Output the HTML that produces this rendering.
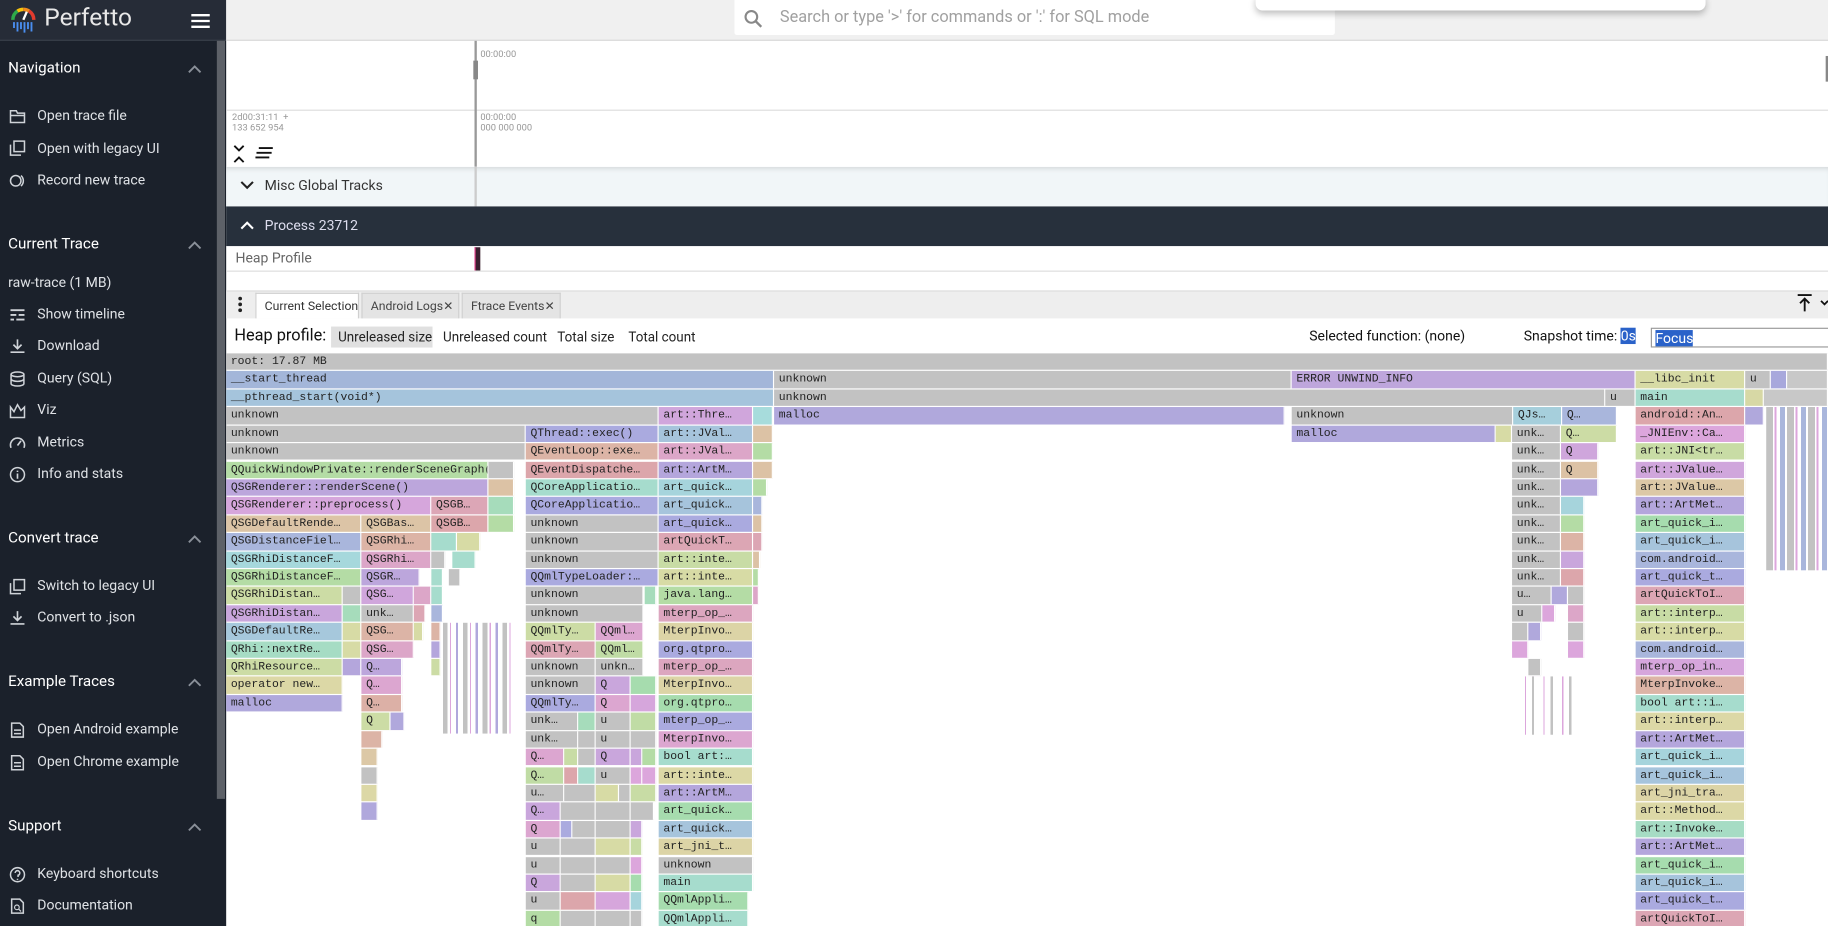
<!DOCTYPE html>
<html><head><meta charset="utf-8">
<style>
*{box-sizing:border-box;margin:0;padding:0}
html,body{width:1828px;height:926px;overflow:hidden;background:#fff}
#w{position:absolute;left:0;top:0;width:1568px;height:794px;transform:scale(1.16582,1.16625);transform-origin:0 0;font-family:"Roboto","Liberation Sans",sans-serif;overflow:hidden}
.abs{position:absolute;white-space:nowrap}
#sb{left:0;top:0;width:194px;height:794px;background:#1b212b;color:#e6e8ea}
#sbh{left:0;top:0;width:194px;height:35px;background:#262c37;border-bottom:1px solid #3a404a}
#scr{left:186px;top:35px;width:7px;height:650px;background:#5d6168}
.sh{position:absolute;left:7px;font-size:13px;color:#fff}
.si{position:absolute;left:32px;font-size:12px;color:#dfe2e6;white-space:nowrap}
.ic{position:absolute;left:8px;width:14px;height:14px}
.chev{position:absolute;left:161px;width:12px;height:8px}
#top{left:194px;top:0;width:1374px;height:35px;background:#f0f0f0;border-bottom:1px solid #d8d8d8}
.r{position:absolute;left:0;width:1568px;height:14.4px}
.r i{position:absolute;top:0;height:14.4px;font-style:normal;font-family:"Liberation Mono","DejaVu Sans Mono",monospace;font-size:9.8px;line-height:14.4px;padding-left:4px;color:#222;white-space:nowrap;overflow:hidden;border-right:1px solid #fff}
.tab{position:absolute;top:251px;height:22px;font-size:10.5px;line-height:22px;padding-left:7px;color:#444;background:#e4e4e4;border:1px solid #d0d0d0;border-bottom:none;white-space:nowrap;overflow:hidden}
.btn{position:absolute;top:280px;height:18px;font-size:11.5px;line-height:18px;color:#222;padding:0 6px;white-space:nowrap}
</style></head><body><div id="w">

<!-- sidebar -->
<div id="sb" class="abs">
 <div id="sbh" class="abs">
  <svg class="abs" style="left:8px;top:4px" width="24" height="26" viewBox="0 0 24 26">
   <path d="M3 13 A9 9 0 0 1 7 5.5" stroke="#2eaa4a" stroke-width="3" fill="none"/>
   <path d="M7 5.5 A9 9 0 0 1 12 4" stroke="#f6c20d" stroke-width="3" fill="none"/>
   <path d="M12 4 A9 9 0 0 1 17 5.5" stroke="#f08a1d" stroke-width="3" fill="none"/>
   <path d="M17 5.5 A9 9 0 0 1 21 13" stroke="#e23b2e" stroke-width="3" fill="none"/>
   <path d="M12 13 L15 6" stroke="#fff" stroke-width="2"/>
   <path d="M4 15v5M7 15v8M10 15v6M13 15v9M16 15v6M19 15v8" stroke="#4a8ef0" stroke-width="1.6"/>
  </svg>
  <div class="abs" style="left:38px;top:4px;font-size:21px;color:#e8e8e8">Perfetto</div>
  <svg class="abs" style="left:164px;top:12px" width="16" height="12"><path d="M0 1h16M0 6h16M0 11h16" stroke="#fff" stroke-width="2"/></svg>
 </div>
 <div id="scr" class="abs"></div>

 <div class="sh" style="top:51px">Navigation</div>
 <svg class="chev" style="top:55px" viewBox="0 0 12 8"><path d="M1 7l5-5 5 5" stroke="#8a9099" stroke-width="1.6" fill="none"/></svg>
 <svg class="ic" style="top:93px" viewBox="0 0 14 14"><path d="M1 2h5l1 2h6v8H1z M1 6h12" stroke="#cfd3d8" stroke-width="1.3" fill="none"/></svg>
 <div class="si" style="top:92px">Open trace file</div>
 <svg class="ic" style="top:120px" viewBox="0 0 14 14"><path d="M4 1h9v9H4z M1 4v9h9" stroke="#cfd3d8" stroke-width="1.3" fill="none"/></svg>
 <div class="si" style="top:120px">Open with legacy UI</div>
 <svg class="ic" style="top:148px" viewBox="0 0 14 14"><circle cx="5.5" cy="7" r="4.5" stroke="#cfd3d8" stroke-width="1.3" fill="none"/><path d="M10 2.5a6 6 0 0 1 0 9" stroke="#cfd3d8" stroke-width="1.3" fill="none"/></svg>
 <div class="si" style="top:147px">Record new trace</div>

 <div class="sh" style="top:202px">Current Trace</div>
 <svg class="chev" style="top:206px" viewBox="0 0 12 8"><path d="M1 7l5-5 5 5" stroke="#8a9099" stroke-width="1.6" fill="none"/></svg>
 <div class="si" style="left:7px;top:235px">raw-trace (1 MB)</div>
 <svg class="ic" style="top:263px" viewBox="0 0 14 14"><path d="M1 3h12M1 7h5M8 7h5M1 11h3M6 11h7" stroke="#cfd3d8" stroke-width="1.6"/></svg>
 <div class="si" style="top:262px">Show timeline</div>
 <svg class="ic" style="top:290px" viewBox="0 0 14 14"><path d="M7 1v8M3.5 5.5L7 9l3.5-3.5M1 12h12" stroke="#cfd3d8" stroke-width="1.4" fill="none"/></svg>
 <div class="si" style="top:289px">Download</div>
 <svg class="ic" style="top:318px" viewBox="0 0 14 14"><ellipse cx="7" cy="3" rx="5.5" ry="2" stroke="#cfd3d8" fill="none" stroke-width="1.3"/><path d="M1.5 3v8c0 1 2.5 2 5.5 2s5.5-1 5.5-2V3M1.5 7c0 1 2.5 2 5.5 2s5.5-1 5.5-2" stroke="#cfd3d8" fill="none" stroke-width="1.3"/></svg>
 <div class="si" style="top:317px">Query (SQL)</div>
 <svg class="ic" style="top:345px" viewBox="0 0 14 14"><path d="M1 13V4l3 4 3-6 3 5 3-3v9z" stroke="#cfd3d8" stroke-width="1.3" fill="none"/></svg>
 <div class="si" style="top:344px">Viz</div>
 <svg class="ic" style="top:373px" viewBox="0 0 14 14"><path d="M1.5 11a6 6 0 1 1 11 0" stroke="#cfd3d8" stroke-width="1.4" fill="none"/><path d="M7 9l3-4" stroke="#cfd3d8" stroke-width="1.4"/></svg>
 <div class="si" style="top:372px">Metrics</div>
 <svg class="ic" style="top:400px" viewBox="0 0 14 14"><circle cx="7" cy="7" r="6" stroke="#cfd3d8" stroke-width="1.3" fill="none"/><path d="M7 6v4.5M7 3.5v1.2" stroke="#cfd3d8" stroke-width="1.4"/></svg>
 <div class="si" style="top:399px">Info and stats</div>

 <div class="sh" style="top:454px">Convert trace</div>
 <svg class="chev" style="top:458px" viewBox="0 0 12 8"><path d="M1 7l5-5 5 5" stroke="#8a9099" stroke-width="1.6" fill="none"/></svg>
 <svg class="ic" style="top:496px" viewBox="0 0 14 14"><path d="M4 1h9v9H4z M1 4v9h9" stroke="#cfd3d8" stroke-width="1.3" fill="none"/></svg>
 <div class="si" style="top:495px">Switch to legacy UI</div>
 <svg class="ic" style="top:523px" viewBox="0 0 14 14"><path d="M7 1v8M3.5 5.5L7 9l3.5-3.5M1 12h12" stroke="#cfd3d8" stroke-width="1.4" fill="none"/></svg>
 <div class="si" style="top:522px">Convert to .json</div>

 <div class="sh" style="top:577px">Example Traces</div>
 <svg class="chev" style="top:581px" viewBox="0 0 12 8"><path d="M1 7l5-5 5 5" stroke="#8a9099" stroke-width="1.6" fill="none"/></svg>
 <svg class="ic" style="top:619px" viewBox="0 0 14 14"><path d="M2 1h7l3 3v9H2z M4 7h6M4 10h6" stroke="#cfd3d8" stroke-width="1.3" fill="none"/></svg>
 <div class="si" style="top:618px">Open Android example</div>
 <svg class="ic" style="top:647px" viewBox="0 0 14 14"><path d="M2 1h7l3 3v9H2z M4 7h6M4 10h6" stroke="#cfd3d8" stroke-width="1.3" fill="none"/></svg>
 <div class="si" style="top:646px">Open Chrome example</div>

 <div class="sh" style="top:701px">Support</div>
 <svg class="chev" style="top:705px" viewBox="0 0 12 8"><path d="M1 7l5-5 5 5" stroke="#8a9099" stroke-width="1.6" fill="none"/></svg>
 <svg class="ic" style="top:743px" viewBox="0 0 14 14"><circle cx="7" cy="7" r="6" stroke="#cfd3d8" stroke-width="1.3" fill="none"/><path d="M5 5.5a2 2 0 1 1 2.5 2V9M7 10.5v1" stroke="#cfd3d8" stroke-width="1.3" fill="none"/></svg>
 <div class="si" style="top:742px">Keyboard shortcuts</div>
 <svg class="ic" style="top:770px" viewBox="0 0 14 14"><path d="M2 1h7l3 3v9H2z" stroke="#cfd3d8" stroke-width="1.3" fill="none"/><circle cx="6.5" cy="8" r="2" stroke="#cfd3d8" fill="none"/><path d="M8 9.5l2 2" stroke="#cfd3d8"/></svg>
 <div class="si" style="top:769px">Documentation</div>
</div>

<!-- top bar -->
<div id="top" class="abs"></div>
<div class="abs" style="left:630px;top:0;width:515px;height:30px;background:#fff;border-radius:0 0 2px 2px"></div>
<svg class="abs" style="left:638px;top:8px" width="16" height="16"><circle cx="6.5" cy="6.5" r="5" stroke="#888" stroke-width="1.8" fill="none"/><path d="M10 10l5 5" stroke="#888" stroke-width="2"/></svg>
<div class="abs" style="left:669px;top:7px;font-size:14px;color:#a0a0a0">Search or type '&gt;' for commands or ':' for SQL mode</div>
<div class="abs" style="left:1077px;top:-6px;width:386px;height:15px;background:#fff;border-radius:6px;box-shadow:0 3px 6px rgba(0,0,0,.25)"></div>

<!-- timeline -->
<div class="abs" style="left:194px;top:94px;width:1374px;height:1px;background:#ddd"></div>
<div class="abs" style="left:407px;top:35px;width:1.5px;height:108px;background:#999"></div>
<div class="abs" style="left:406px;top:52px;width:4px;height:16px;background:#888"></div>
<div class="abs" style="left:1566px;top:48px;width:2px;height:22px;background:#888"></div>
<div class="abs" style="left:412px;top:42px;font-size:8px;color:#999">00:00:00</div>
<div class="abs" style="left:199px;top:96px;font-size:8px;color:#999;line-height:9px">2d00:31:11 &nbsp;+<br>133 652 954</div>
<div class="abs" style="left:412px;top:96px;font-size:8px;color:#999;line-height:9px">00:00:00<br>000 000 000</div>
<svg class="abs" style="left:200px;top:124px" width="10" height="16"><path d="M1 1l4 4 4-4M1 15l4-4 4 4" stroke="#111" stroke-width="1.6" fill="none"/></svg>
<svg class="abs" style="left:219px;top:126px" width="16" height="10"><path d="M3 1h12M1 5h13M0 9h12" stroke="#111" stroke-width="1.6"/></svg>
<div class="abs" style="left:194px;top:143px;width:1374px;height:34px;background:#f1f6f8;box-shadow:inset 0 4px 5px -3px rgba(0,0,0,.15)"></div>
<div class="abs" style="left:407px;top:143px;width:1.5px;height:34px;background:#ccc"></div>
<svg class="abs" style="left:206px;top:155px" width="12" height="8"><path d="M1 1l5 5 5-5" stroke="#222" stroke-width="1.8" fill="none"/></svg>
<div class="abs" style="left:227px;top:152px;font-size:12px;color:#333">Misc Global Tracks</div>
<div class="abs" style="left:194px;top:177px;width:1374px;height:34px;background:#27303c"></div>
<svg class="abs" style="left:206px;top:189px" width="12" height="8"><path d="M1 7l5-5 5 5" stroke="#fff" stroke-width="1.8" fill="none"/></svg>
<div class="abs" style="left:227px;top:186px;font-size:12px;color:#dde">Process 23712</div>
<div class="abs" style="left:202px;top:214px;font-size:12px;color:#666">Heap Profile</div>
<div class="abs" style="left:407px;top:212px;width:5px;height:20px;background:#3a2030;border-left:1px solid #e0408a"></div>
<div class="abs" style="left:194px;top:232px;width:1374px;height:1px;background:#ddd"></div>

<!-- tabs -->
<div class="abs" style="left:194px;top:249px;width:1374px;height:24px;background:#eee;border-top:1px solid #ddd"></div>
<svg class="abs" style="left:203px;top:253px" width="6" height="16"><circle cx="3" cy="3" r="1.6" fill="#222"/><circle cx="3" cy="8" r="1.6" fill="#222"/><circle cx="3" cy="13" r="1.6" fill="#222"/></svg>
<div class="tab" style="left:219px;width:89px;background:#fff;color:#333">Current Selection</div>
<div class="tab" style="left:310px;width:84px">Android Logs<span style="position:absolute;right:4px">✕</span></div>
<div class="tab" style="left:396px;width:85px">Ftrace Events<span style="position:absolute;right:4px">✕</span></div>
<svg class="abs" style="left:1541px;top:252px" width="14" height="16"><path d="M1 1h12M7 4v11M3 8l4-4 4 4" stroke="#111" stroke-width="1.6" fill="none"/></svg>
<svg class="abs" style="left:1561px;top:257px" width="8" height="6"><path d="M1 1l3 3 3-3" stroke="#111" stroke-width="1.5" fill="none"/></svg>

<!-- heap controls -->
<div class="abs" style="left:201px;top:280px;font-size:14px;color:#111">Heap profile:</div>
<div class="btn" style="left:284px;width:87px;background:#e0e0e0">Unreleased size</div>
<div class="btn" style="left:374px">Unreleased count</div>
<div class="btn" style="left:472px">Total size</div>
<div class="btn" style="left:533px">Total count</div>
<div class="abs" style="left:1123px;top:281px;font-size:12px;color:#111">Selected function: (none)</div>
<div class="abs" style="left:1307px;top:281px;font-size:12px;color:#111">Snapshot time: <span style="background:#2a62c9;color:#fff">0s</span></div>
<div class="abs" style="left:1416px;top:281px;width:160px;height:17px;border:1px solid #999;background:#fff"><span style="position:absolute;left:3px;top:1px;font-size:12px;background:#2a62c9;color:#fff;line-height:14px">Focus</span></div>

<!-- flamegraph -->
<div class="r" style="top:303px"><i style="left:194px;width:1374px;background:#c2c2c2">root: 17.87 MB</i></div>
<div class="r" style="top:318.4px"><i style="left:194px;width:470px;background:#a3b6d9">__start_thread</i><i style="left:664px;width:444px;background:#c2c2c2">unknown</i><i style="left:1108px;width:295px;background:#bea6dc">ERROR UNWIND_INFO</i><i style="left:1403px;width:94px;background:#d7dba5">__libc_init</i><i style="left:1497px;width:22px;background:#c2c2c2">u</i><i style="left:1519px;width:14px;background:#a8a8dc"></i><i style="left:1533px;width:35px;background:#c8c8c8"></i></div>
<div class="r" style="top:333.8px"><i style="left:194px;width:470px;background:#a5c4dc">__pthread_start(void*)</i><i style="left:664px;width:713px;background:#c2c2c2">unknown</i><i style="left:1377px;width:26px;background:#c2c2c2">u</i><i style="left:1403px;width:94px;background:#a7dccd">main</i><i style="left:1497px;width:16px;background:#d7d8a5"></i><i style="left:1513px;width:55px;background:#c8c8c8"></i></div>
<div class="r" style="top:349.3px"><i style="left:194px;width:371px;background:#c2c2c2">unknown</i><i style="left:565px;width:81px;background:#d0a6dc">art::Thre…</i><i style="left:646px;width:17px;background:#a7dcdc"></i><i style="left:664px;width:438px;background:#b0a8dc">malloc</i><i style="left:1108px;width:190px;background:#c2c2c2">unknown</i><i style="left:1298px;width:42px;background:#a6cfdc">QJs…</i><i style="left:1340px;width:47px;background:#a9b6dc">Q…</i><i style="left:1403px;width:94px;background:#dca6ab">android::An…</i><i style="left:1497px;width:16px;background:#b0a8dc"></i><i style="left:1517px;width:30px;background:#c8c8c8"></i></div>
<div class="r" style="top:364.7px"><i style="left:194px;width:257px;background:#c2c2c2">unknown</i><i style="left:451px;width:114px;background:#aaaadf">QThread::exec()</i><i style="left:565px;width:81px;background:#a6c4dc">art::JVal…</i><i style="left:646px;width:17px;background:#dcc2a5"></i><i style="left:1108px;width:175px;background:#b0a8dc">malloc</i><i style="left:1283px;width:14px;background:#d7dba5"></i><i style="left:1297px;width:42px;background:#c2c2c2">unk…</i><i style="left:1339px;width:48px;background:#ccdca5">Q…</i><i style="left:1403px;width:94px;background:#dca6dc">_JNIEnv::Ca…</i></div>
<div class="r" style="top:380.1px"><i style="left:194px;width:257px;background:#c2c2c2">unknown</i><i style="left:451px;width:114px;background:#dcb4a6">QEventLoop::exe…</i><i style="left:565px;width:81px;background:#dca6c8">art::JVal…</i><i style="left:646px;width:17px;background:#b4dca5"></i><i style="left:1297px;width:42px;background:#c2c2c2">unk…</i><i style="left:1339px;width:32px;background:#cfa6dc">Q</i><i style="left:1403px;width:94px;background:#c8dca5">art::JNI&lt;tr…</i></div>
<div class="r" style="top:395.5px"><i style="left:194px;width:225px;background:#b4dca5">QQuickWindowPrivate::renderSceneGraph()</i><i style="left:419px;width:22px;background:#c2c2c2"></i><i style="left:451px;width:114px;background:#dca6ab">QEventDispatche…</i><i style="left:565px;width:81px;background:#b4a6dc">art::ArtM…</i><i style="left:646px;width:17px;background:#dcc2a5"></i><i style="left:1297px;width:42px;background:#c2c2c2">unk…</i><i style="left:1339px;width:32px;background:#dcc2a5">Q</i><i style="left:1403px;width:94px;background:#d0a6dc">art::JValue…</i></div>
<div class="r" style="top:410.9px"><i style="left:194px;width:225px;background:#bca6dc">QSGRenderer::renderScene()</i><i style="left:419px;width:22px;background:#dcc2a5"></i><i style="left:451px;width:114px;background:#a6dccd">QCoreApplicatio…</i><i style="left:565px;width:81px;background:#a6d4dc">art_quick…</i><i style="left:646px;width:12px;background:#b4dca5"></i><i style="left:1297px;width:42px;background:#c2c2c2">unk…</i><i style="left:1339px;width:32px;background:#b4a6dc"></i><i style="left:1403px;width:94px;background:#dcc8a6">art::JValue…</i></div>
<div class="r" style="top:426.3px"><i style="left:194px;width:176px;background:#d6a6dc">QSGRenderer::preprocess()</i><i style="left:370px;width:49px;background:#dca6b6">QSGB…</i><i style="left:419px;width:22px;background:#a6dcbb"></i><i style="left:451px;width:114px;background:#aaaadf">QCoreApplicatio…</i><i style="left:565px;width:81px;background:#a6c4dc">art_quick…</i><i style="left:646px;width:8px;background:#a9b6dc"></i><i style="left:1297px;width:42px;background:#c2c2c2">unk…</i><i style="left:1339px;width:20px;background:#a6d4dc"></i><i style="left:1403px;width:94px;background:#b4a6dc">art::ArtMet…</i></div>
<div class="r" style="top:441.7px"><i style="left:194px;width:116px;background:#dcc4a6">QSGDefaultRende…</i><i style="left:310px;width:60px;background:#dcc4a6">QSGBas…</i><i style="left:370px;width:49px;background:#dca6ab">QSGB…</i><i style="left:419px;width:22px;background:#b4dca5"></i><i style="left:451px;width:114px;background:#c2c2c2">unknown</i><i style="left:565px;width:81px;background:#aaaadf">art_quick…</i><i style="left:646px;width:8px;background:#dcc2a5"></i><i style="left:1297px;width:42px;background:#c2c2c2">unk…</i><i style="left:1339px;width:20px;background:#b4dca5"></i><i style="left:1403px;width:94px;background:#a6dcae">art_quick_i…</i></div>
<div class="r" style="top:457.2px"><i style="left:194px;width:116px;background:#a9b6dc">QSGDistanceFiel…</i><i style="left:310px;width:60px;background:#dcb4a6">QSGRhi…</i><i style="left:370px;width:22px;background:#a6dccd"></i><i style="left:392px;width:20px;background:#d7dba5"></i><i style="left:451px;width:114px;background:#c2c2c2">unknown</i><i style="left:565px;width:81px;background:#dca6b4">artQuickT…</i><i style="left:646px;width:8px;background:#dca6b4"></i><i style="left:1297px;width:42px;background:#c2c2c2">unk…</i><i style="left:1339px;width:20px;background:#dcb4a6"></i><i style="left:1403px;width:94px;background:#a6c4dc">art_quick_i…</i></div>
<div class="r" style="top:472.6px"><i style="left:194px;width:116px;background:#a6d8dc">QSGRhiDistanceF…</i><i style="left:310px;width:60px;background:#dca6c8">QSGRhi…</i><i style="left:370px;width:12px;background:#c2c2c2"></i><i style="left:388px;width:20px;background:#a6dccd"></i><i style="left:451px;width:114px;background:#c2c2c2">unknown</i><i style="left:565px;width:81px;background:#c8dca5">art::inte…</i><i style="left:646px;width:6px;background:#dcc2a5"></i><i style="left:1297px;width:42px;background:#c2c2c2">unk…</i><i style="left:1339px;width:20px;background:#c9a6dc"></i><i style="left:1403px;width:94px;background:#a9b6dc">com.android…</i></div>
<div class="r" style="top:488px"><i style="left:194px;width:116px;background:#b4dca5">QSGRhiDistanceF…</i><i style="left:310px;width:50px;background:#bca6dc">QSGR…</i><i style="left:370px;width:10px;background:#a6dccd"></i><i style="left:385px;width:10px;background:#c2c2c2"></i><i style="left:451px;width:114px;background:#aaaadf">QQmlTypeLoader:…</i><i style="left:565px;width:81px;background:#d7dba5">art::inte…</i><i style="left:646px;width:5px;background:#b4dca5"></i><i style="left:1297px;width:42px;background:#c2c2c2">unk…</i><i style="left:1339px;width:20px;background:#dca6ab"></i><i style="left:1403px;width:94px;background:#aaaadf">art_quick_t…</i></div>
<div class="r" style="top:503.4px"><i style="left:194px;width:100px;background:#ccdca5">QSGRhiDistan…</i><i style="left:294px;width:16px;background:#c2c2c2"></i><i style="left:310px;width:45px;background:#d0a6dc">QSG…</i><i style="left:355px;width:15px;background:#dca6c8"></i><i style="left:370px;width:10px;background:#a6dccd"></i><i style="left:451px;width:101px;background:#c2c2c2">unknown</i><i style="left:553px;width:10px;background:#a6dcbb"></i><i style="left:565px;width:81px;background:#b4dca5">java.lang…</i><i style="left:646px;width:5px;background:#dca6c8"></i><i style="left:1297px;width:34px;background:#c2c2c2">u…</i><i style="left:1331px;width:14px;background:#b0a8dc"></i><i style="left:1345px;width:14px;background:#c2c2c2"></i><i style="left:1403px;width:94px;background:#dca6b4">artQuickToI…</i></div>
<div class="r" style="top:518.8px"><i style="left:194px;width:100px;background:#c9a6dc">QSGRhiDistan…</i><i style="left:294px;width:16px;background:#a6dcbb"></i><i style="left:310px;width:45px;background:#c2c2c2">unk…</i><i style="left:355px;width:10px;background:#dca6b4"></i><i style="left:370px;width:10px;background:#a9b6dc"></i><i style="left:451px;width:101px;background:#c2c2c2">unknown</i><i style="left:565px;width:81px;background:#dca6bf">mterp_op_…</i><i style="left:1297px;width:26px;background:#c2c2c2">u</i><i style="left:1323px;width:11px;background:#dca6dc"></i><i style="left:1345px;width:14px;background:#dca6c8"></i><i style="left:1403px;width:94px;background:#c8dca5">art::interp…</i></div>
<div class="r" style="top:534.2px"><i style="left:194px;width:100px;background:#a6c8dc">QSGDefaultRe…</i><i style="left:294px;width:16px;background:#d7dba5"></i><i style="left:310px;width:45px;background:#dcb4a6">QSG…</i><i style="left:355px;width:8px;background:#d7dba5"></i><i style="left:370px;width:8px;background:#dcb4a6"></i><i style="left:451px;width:60px;background:#ccdca5">QQmlTy…</i><i style="left:511px;width:41px;background:#dca6d0">QQml…</i><i style="left:565px;width:81px;background:#dcd4a6">MterpInvo…</i><i style="left:1297px;width:14px;background:#c2c2c2"></i><i style="left:1311px;width:11px;background:#b0a8dc"></i><i style="left:1345px;width:14px;background:#c2c2c2"></i><i style="left:1403px;width:94px;background:#d7dba5">art::interp…</i></div>
<div class="r" style="top:549.6px"><i style="left:194px;width:100px;background:#a6dcc4">QRhi::nextRe…</i><i style="left:294px;width:16px;background:#d7dba5"></i><i style="left:310px;width:45px;background:#dca6c8">QSG…</i><i style="left:370px;width:8px;background:#b4a6dc"></i><i style="left:451px;width:60px;background:#dca6b4">QQmlTy…</i><i style="left:511px;width:41px;background:#c0dca5">QQml…</i><i style="left:565px;width:81px;background:#aaaadf">org.qtpro…</i><i style="left:1297px;width:14px;background:#dca6dc"></i><i style="left:1345px;width:14px;background:#dca6dc"></i><i style="left:1403px;width:94px;background:#a9b6dc">com.android…</i></div>
<div class="r" style="top:565px"><i style="left:194px;width:100px;background:#ccdca5">QRhiResource…</i><i style="left:294px;width:16px;background:#b4a6dc"></i><i style="left:310px;width:35px;background:#bca6dc">Q…</i><i style="left:370px;width:8px;background:#ccdca5"></i><i style="left:451px;width:60px;background:#c2c2c2">unknown</i><i style="left:511px;width:41px;background:#c2c2c2">unkn…</i><i style="left:565px;width:81px;background:#dca6bf">mterp_op_…</i><i style="left:1311px;width:11px;background:#c2c2c2"></i><i style="left:1403px;width:94px;background:#d6a6dc">mterp_op_in…</i></div>
<div class="r" style="top:580.4px"><i style="left:194px;width:100px;background:#dcd8a6">operator new…</i><i style="left:310px;width:35px;background:#dca6d0">Q…</i><i style="left:451px;width:60px;background:#c2c2c2">unknown</i><i style="left:511px;width:30px;background:#c9a6dc">Q</i><i style="left:541px;width:22px;background:#a6dcae"></i><i style="left:565px;width:81px;background:#dcd4a6">MterpInvo…</i><i style="left:1311px;width:11px;background:#dca6dc"></i><i style="left:1403px;width:94px;background:#dcb4a6">MterpInvoke…</i></div>
<div class="r" style="top:595.8px"><i style="left:194px;width:100px;background:#b0a8dc">malloc</i><i style="left:310px;width:35px;background:#dcb0a6">Q…</i><i style="left:451px;width:60px;background:#aaaadf">QQmlTy…</i><i style="left:511px;width:30px;background:#dca6d0">Q</i><i style="left:541px;width:22px;background:#d6a6dc"></i><i style="left:565px;width:81px;background:#a6dcae">org.qtpro…</i><i style="left:1403px;width:94px;background:#a6dccd">bool art::i…</i></div>
<div class="r" style="top:611.2px"><i style="left:310px;width:25px;background:#ccdca5">Q</i><i style="left:335px;width:12px;background:#b0a8dc"></i><i style="left:451px;width:45px;background:#c2c2c2">unk…</i><i style="left:496px;width:15px;background:#a6dcbb"></i><i style="left:511px;width:30px;background:#c2c2c2">u</i><i style="left:541px;width:22px;background:#c0dca5"></i><i style="left:565px;width:81px;background:#aaaadf">mterp_op_…</i><i style="left:1403px;width:94px;background:#dcd8a6">art::interp…</i></div>
<div class="r" style="top:626.7px"><i style="left:310px;width:18px;background:#dcb4a6"></i><i style="left:451px;width:45px;background:#c2c2c2">unk…</i><i style="left:496px;width:15px;background:#c2c2c2"></i><i style="left:511px;width:30px;background:#c2c2c2">u</i><i style="left:541px;width:22px;background:#c2c2c2"></i><i style="left:565px;width:81px;background:#dca6d0">MterpInvo…</i><i style="left:1403px;width:94px;background:#b4a6dc">art::ArtMet…</i></div>
<div class="r" style="top:642.1px"><i style="left:310px;width:14px;background:#dcc8a6"></i><i style="left:451px;width:33px;background:#dca6d0">Q…</i><i style="left:484px;width:12px;background:#c8dca5"></i><i style="left:496px;width:15px;background:#c2c2c2"></i><i style="left:511px;width:30px;background:#c9a6dc">Q</i><i style="left:541px;width:10px;background:#c9a6dc"></i><i style="left:551px;width:12px;background:#b4dca5"></i><i style="left:565px;width:81px;background:#a6dccd">bool art:…</i><i style="left:1403px;width:94px;background:#a6d4dc">art_quick_i…</i></div>
<div class="r" style="top:657.5px"><i style="left:310px;width:14px;background:#c2c2c2"></i><i style="left:451px;width:33px;background:#c0dca5">Q…</i><i style="left:484px;width:12px;background:#dca6ab"></i><i style="left:496px;width:15px;background:#a6dccd"></i><i style="left:511px;width:30px;background:#c2c2c2">u</i><i style="left:541px;width:10px;background:#dca6dc"></i><i style="left:551px;width:12px;background:#dca6dc"></i><i style="left:565px;width:81px;background:#dcd8a6">art::inte…</i><i style="left:1403px;width:94px;background:#a6c4dc">art_quick_i…</i></div>
<div class="r" style="top:672.9px"><i style="left:310px;width:14px;background:#dcd8a6"></i><i style="left:451px;width:33px;background:#c2c2c2">u…</i><i style="left:484px;width:27px;background:#c2c2c2"></i><i style="left:511px;width:20px;background:#d7dba5"></i><i style="left:531px;width:10px;background:#c2c2c2"></i><i style="left:541px;width:22px;background:#c8dca5"></i><i style="left:565px;width:81px;background:#b4a6dc">art::ArtM…</i><i style="left:1403px;width:94px;background:#dcd4a6">art_jni_tra…</i></div>
<div class="r" style="top:688.3px"><i style="left:310px;width:14px;background:#b0a8dc"></i><i style="left:451px;width:30px;background:#c9a6dc">Q…</i><i style="left:481px;width:30px;background:#c2c2c2"></i><i style="left:511px;width:30px;background:#c2c2c2"></i><i style="left:541px;width:20px;background:#c2c2c2"></i><i style="left:565px;width:81px;background:#a6dcae">art_quick…</i><i style="left:1403px;width:94px;background:#dcd8a6">art::Method…</i></div>
<div class="r" style="top:703.7px"><i style="left:451px;width:30px;background:#dca6d0">Q</i><i style="left:481px;width:10px;background:#aaaadf"></i><i style="left:491px;width:20px;background:#c2c2c2"></i><i style="left:511px;width:30px;background:#c2c2c2"></i><i style="left:541px;width:10px;background:#c9a6dc"></i><i style="left:565px;width:81px;background:#a6c4dc">art_quick…</i><i style="left:1403px;width:94px;background:#a6dcc4">art::Invoke…</i></div>
<div class="r" style="top:719.1px"><i style="left:451px;width:30px;background:#c2c2c2">u</i><i style="left:481px;width:30px;background:#c2c2c2"></i><i style="left:511px;width:30px;background:#d7dba5"></i><i style="left:541px;width:10px;background:#c8dca5"></i><i style="left:565px;width:81px;background:#dcd4a6">art_jni_t…</i><i style="left:1403px;width:94px;background:#b4a6dc">art::ArtMet…</i></div>
<div class="r" style="top:734.5px"><i style="left:451px;width:30px;background:#c2c2c2">u</i><i style="left:481px;width:30px;background:#c2c2c2"></i><i style="left:511px;width:30px;background:#c2c2c2"></i><i style="left:541px;width:10px;background:#dca6dc"></i><i style="left:565px;width:81px;background:#c2c2c2">unknown</i><i style="left:1403px;width:94px;background:#a6dcae">art_quick_i…</i></div>
<div class="r" style="top:750px"><i style="left:451px;width:30px;background:#c9a6dc">Q</i><i style="left:481px;width:30px;background:#c2c2c2"></i><i style="left:511px;width:30px;background:#d7dba5"></i><i style="left:541px;width:10px;background:#a6dcae"></i><i style="left:565px;width:81px;background:#a6dccd">main</i><i style="left:1403px;width:94px;background:#a6c4dc">art_quick_i…</i></div>
<div class="r" style="top:765.4px"><i style="left:451px;width:30px;background:#c2c2c2">u</i><i style="left:481px;width:30px;background:#dca6ab"></i><i style="left:511px;width:30px;background:#d6a6dc"></i><i style="left:541px;width:10px;background:#a6d4dc"></i><i style="left:565px;width:77px;background:#a6dcae">QQmlAppli…</i><i style="left:1403px;width:94px;background:#aaaadf">art_quick_t…</i></div>
<div class="r" style="top:780.8px"><i style="left:451px;width:30px;background:#b4dca5">q</i><i style="left:481px;width:30px;background:#c2c2c2"></i><i style="left:511px;width:30px;background:#c2c2c2"></i><i style="left:541px;width:10px;background:#c2c2c2"></i><i style="left:565px;width:77px;background:#a6dccd">QQmlAppli…</i><i style="left:1403px;width:94px;background:#dca6b4">artQuickToI…</i></div>

<!-- thin decorative strips -->
<div class="abs" style="left:1515px;top:349px;width:53px;height:140px;background:repeating-linear-gradient(90deg,#c2c2c2 0 6px,#fff 6px 7px,#dca6dc 7px 9px,#fff 9px 12px,#a9b6dc 12px 16px,#fff 16px 18px)"></div>
<div class="abs" style="left:380px;top:534px;width:60px;height:95px;background:repeating-linear-gradient(90deg,#c2c2c2 0 4px,#fff 4px 6px,#dca6dc 6px 7px,#fff 7px 11px,#b0a8dc 11px 13px,#fff 13px 17px)"></div>
<div class="abs" style="left:1300px;top:580px;width:50px;height:50px;background:repeating-linear-gradient(90deg,#fff 0 8px,#dca6dc 8px 9px,#fff 9px 14px,#c2c2c2 14px 16px)"></div>
</div></body></html>
